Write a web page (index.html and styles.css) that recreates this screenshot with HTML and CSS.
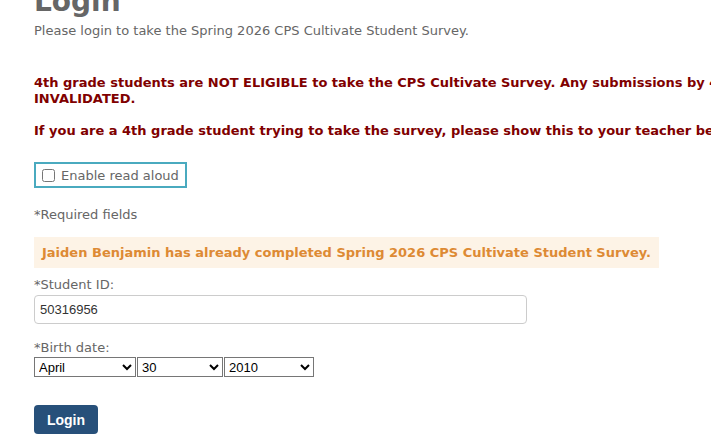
FILE: index.html
```html
<!DOCTYPE html>
<html lang="en">
<head>
    <meta charset="UTF-8">
    <meta name="viewport" content="width=device-width, initial-scale=1.0">
    <title>Login</title>
    <link rel="stylesheet" href="styles.css">
</head>
<body>
    <div class="page">
        <h1>Login</h1>
        <p class="intro">Please login to take the Spring 2026 CPS Cultivate Student Survey.</p>

        <div class="warning">
            <p>4th grade students are NOT ELIGIBLE to take the CPS Cultivate Survey. Any submissions by 4th grade students will be INVALIDATED.</p>
            <p>If you are a 4th grade student trying to take the survey, please show this to your teacher before continuing.</p>
        </div>

        <label class="read-aloud">
            <input type="checkbox">
            <span>Enable read aloud</span>
        </label>

        <p class="required">*Required fields</p>

        <div class="notice">Jaiden Benjamin has already completed Spring 2026 CPS Cultivate Student Survey.</div>

        <form class="login-form">
            <div class="form-group">
                <label for="studentId">*Student ID:</label>
                <input type="text" id="studentId" value="50316956">
            </div>

            <div class="form-group">
                <label>*Birth date:</label>
                <div class="date-row">
                    <select class="month">
                        <option>January</option>
                        <option>February</option>
                        <option>March</option>
                        <option selected>April</option>
                        <option>May</option>
                    </select>
                    <select class="day">
                        <option>29</option>
                        <option selected>30</option>
                        <option>31</option>
                    </select>
                    <select class="year">
                        <option>2009</option>
                        <option selected>2010</option>
                        <option>2011</option>
                    </select>
                </div>
            </div>

            <button type="button" class="button">Login</button>
        </form>
    </div>
</body>
</html>
```

FILE: styles.css
```css
html, body {
    overflow: hidden;
}

body {
    margin: 0;
    padding: 0;
    background-color: #fff;
    color: #666;
    font-family: "DejaVu Sans", Verdana, sans-serif;
    font-size: 13px;
}

/* page is scrolled a little, so the heading sits partly above the fold */
.page {
    width: 1100px;
    margin-top: -12px;
    padding-left: 34px;
}

h1 {
    margin: 0 0 6px;
    font-size: 28px;
    line-height: 28px;
    color: #666;
}

.intro {
    margin: 0;
    line-height: 18px;
}

/* the warning runs wider than the window */
.warning {
    margin-top: 35px;
    color: #800000;
    font-weight: bold;
}

.warning p {
    margin: 0 0 16px;
    line-height: 16px;
    width: 930px;
}

.read-aloud {
    display: inline-flex;
    align-items: center;
    gap: 6px;
    margin-top: 7px;
    padding: 2px 6px;
    height: 18px;
    border: 2px solid #4aaabf;
    color: #666;
}

.read-aloud input {
    margin: 0;
    width: 13px;
    height: 13px;
}

.required {
    margin: 18px 0 0;
    line-height: 18px;
}

.notice {
    display: inline-block;
    margin-top: 13px;
    padding: 7px 8px 6px;
    background-color: #fdf3e6;
    color: #dd8a34;
    font-weight: bold;
    line-height: 18px;
}

.form-group {
    margin-top: 8px;
}

.form-group label {
    display: block;
    line-height: 18px;
}

.form-group input {
    box-sizing: border-box;
    width: 493px;
    height: 29px;
    margin-top: 1px;
    padding: 0 5px;
    border: 1px solid #ccc;
    border-radius: 4px;
    font-family: "Liberation Sans", Arial, sans-serif;
    font-size: 13px;
    color: #333;
}

.form-group + .form-group {
    margin-top: 15px;
}

.date-row {
    display: flex;
    gap: 1px;
}

.date-row select {
    height: 20px;
    font-family: "Liberation Sans", Arial, sans-serif;
    font-size: 13px;
    color: #000;
    border: 1px solid #767676;
    border-radius: 0;
    background-color: #fff;
}

.month { width: 102px; }
.day { width: 86px; }
.year { width: 90px; }

.button {
    margin-top: 28px;
    padding: 0;
    width: 64px;
    height: 29px;
    border: none;
    border-radius: 4px;
    background-color: #27507a;
    color: white;
    font-family: "Liberation Sans", Arial, sans-serif;
    font-size: 14px;
    font-weight: bold;
    cursor: pointer;
}
```
